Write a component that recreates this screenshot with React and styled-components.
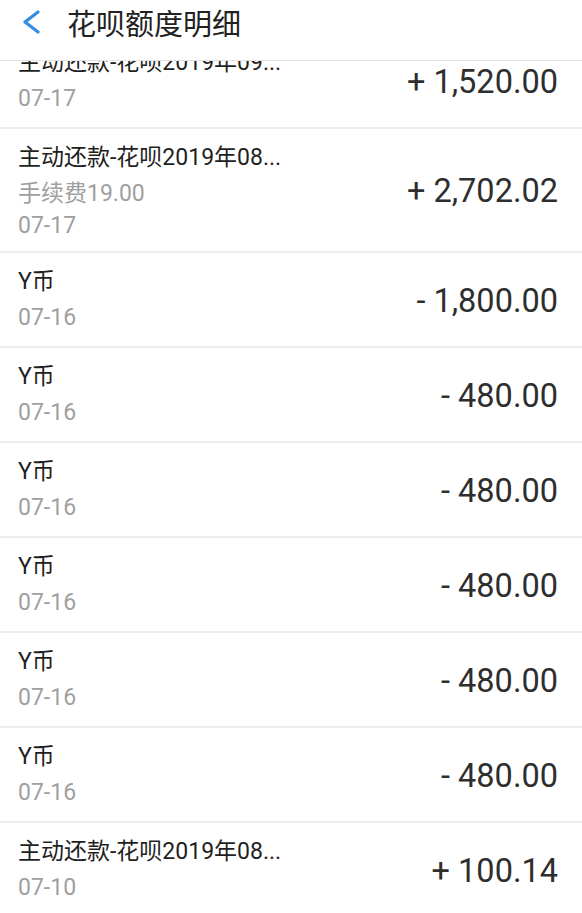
import React from "react";
import styled, { createGlobalStyle } from "styled-components";

const GlobalStyle = createGlobalStyle`
  html, body {
    margin: 0;
    padding: 0;
    background: #fff;
    overflow: hidden;
  }
  * {
    box-sizing: border-box;
  }
`;

const Screen = styled.div`
  width: 582px;
  height: 913px;
  display: flex;
  flex-direction: column;
  background: #fff;
  font-family: Roboto, "Noto Sans CJK SC", sans-serif;
  overflow: hidden;
`;

const Header = styled.header`
  flex: 0 0 61px;
  display: flex;
  align-items: flex-start;
  gap: 26px;
  padding: 7px 0 0 21px;
  border-bottom: 1px solid #e4e4e4;
  background: #fff;
`;

const BackButton = styled.button`
  width: 20px;
  height: 30px;
  padding: 0;
  border: none;
  background: none;
  display: flex;
  align-items: center;
  justify-content: center;
`;

const Title = styled.h1`
  margin: 0;
  font-family: "Noto Sans CJK SC", sans-serif;
  font-size: 29px;
  font-weight: 400;
  color: #222;
  line-height: 30px;
`;

const ListViewport = styled.div`
  flex: 1;
  overflow: hidden;
`;

const List = styled.ul`
  list-style: none;
  margin: -27px 0 0;
  padding: 0;
`;

const Row = styled.li`
  min-height: 95px;
  display: flex;
  align-items: center;
  justify-content: space-between;
  padding: 9px 24px 9px 18px;
  border-bottom: 2px solid #ececec;
`;

const Info = styled.div`
  align-self: flex-start;
  display: flex;
  flex-direction: column;
`;

const ItemName = styled.div`
  font-size: 23px;
  line-height: 40px;
  color: #1f1f1f;
  white-space: nowrap;
`;

const Meta = styled.div`
  font-size: 23px;
  line-height: 32px;
  color: #9f9f9f;
  white-space: nowrap;
`;

const Amount = styled.div`
  font-size: 32.5px;
  font-weight: 400;
  color: #2e2e2e;
  white-space: nowrap;
  margin-top: 2px;
`;

const records = [
  { name: "主动还款-花呗2019年09...", date: "07-17", amount: "+ 1,520.00" },
  { name: "主动还款-花呗2019年08...", fee: "手续费19.00", date: "07-17", amount: "+ 2,702.02" },
  { name: "Y币", date: "07-16", amount: "- 1,800.00" },
  { name: "Y币", date: "07-16", amount: "- 480.00" },
  { name: "Y币", date: "07-16", amount: "- 480.00" },
  { name: "Y币", date: "07-16", amount: "- 480.00" },
  { name: "Y币", date: "07-16", amount: "- 480.00" },
  { name: "Y币", date: "07-16", amount: "- 480.00" },
  { name: "主动还款-花呗2019年08...", date: "07-10", amount: "+ 100.14" },
];

const BackIcon = () => (
  <svg width="19" height="24" viewBox="0 0 19 24" fill="none">
    <polyline
      points="16,2 3,12 16,22"
      stroke="#2f8fe3"
      strokeWidth="3.2"
      strokeLinecap="round"
      strokeLinejoin="round"
    />
  </svg>
);

export default function App() {
  return (
    <>
      <GlobalStyle />
      <Screen>
        <Header>
          <BackButton aria-label="返回">
            <BackIcon />
          </BackButton>
          <Title>花呗额度明细</Title>
        </Header>
        <ListViewport>
          <List>
            {records.map((r, i) => (
              <Row key={i}>
                <Info>
                  <ItemName>{r.name}</ItemName>
                  {r.fee && <Meta>{r.fee}</Meta>}
                  <Meta>{r.date}</Meta>
                </Info>
                <Amount>{r.amount}</Amount>
              </Row>
            ))}
          </List>
        </ListViewport>
      </Screen>
    </>
  );
}
